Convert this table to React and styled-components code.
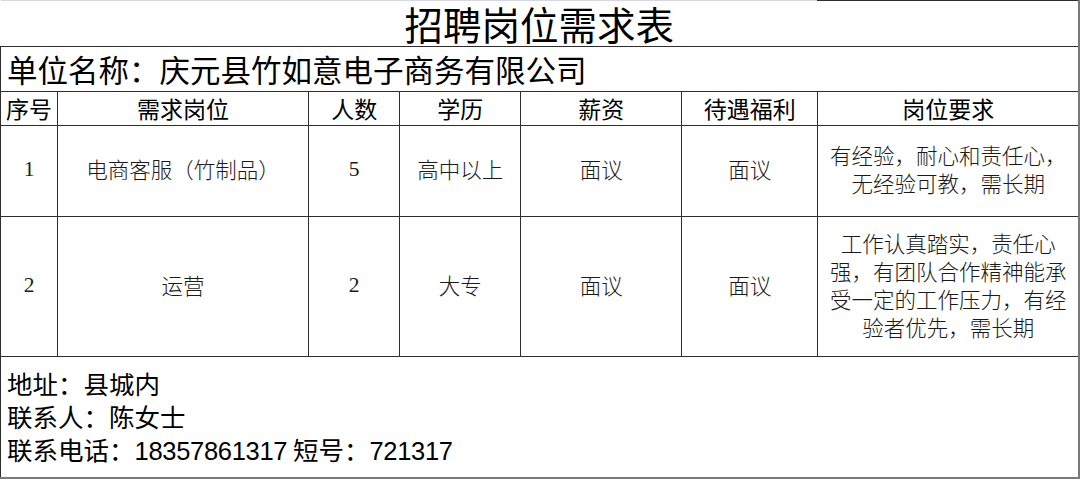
import React from 'react';
import styled, { createGlobalStyle } from 'styled-components';

const GlobalStyle = createGlobalStyle`
  html, body {
    margin: 0;
    padding: 0;
    background: #ffffff;
  }
  body {
    font-family: "Noto Sans CJK SC", sans-serif;
    color: #111;
  }
`;

const columns = [57, 251, 91, 121, 161, 136, 261];

const headers = ['序号', '需求岗位', '人数', '学历', '薪资', '待遇福利', '岗位要求'];

const jobs = [
  {
    no: '1',
    title: '电商客服（竹制品）',
    count: '5',
    edu: '高中以上',
    pay: '面议',
    perks: '面议',
    req: ['有经验，耐心和责任心，', '无经验可教，需长期'],
    height: 91,
  },
  {
    no: '2',
    title: '运营',
    count: '2',
    edu: '大专',
    pay: '面议',
    perks: '面议',
    req: ['工作认真踏实，责任心', '强，有团队合作精神能承', '受一定的工作压力，有经', '验者优先，需长期'],
    height: 140,
  },
];

const Sheet = styled.table`
  width: 1080px;
  table-layout: fixed;
  border-collapse: collapse;
  border-spacing: 0;
  background: #fff;
`;

const Cell = styled.td`
  border: 1px solid #2e2e2e;
  padding: 0 0 4px;
  text-align: center;
  vertical-align: middle;
  font-family: ${p => (p.$digit ? '"Liberation Serif", "Noto Sans CJK SC", serif' : '"Noto Sans CJK SC", sans-serif')};
  font-size: 21.5px;
  font-weight: 300;
  color: #1a1a1a;
  line-height: 28px;
  white-space: nowrap;
  &:last-child {
    border-right: 2px solid #7a7a7a;
  }
`;

const TitleCell = styled.td`
  height: 45px;
  padding: 0;
  border: none;
  border-right: 2px solid #7a7a7a;
  border-bottom: 1px solid #2e2e2e;
  background: linear-gradient(to right, #d6d6de 816px, #2e2e2e 816px) top / 100% 1px no-repeat;
  text-align: center;
  font-size: 38.5px;
  line-height: 46px;
  font-weight: 400;
  color: #000;
`;

const UnitCell = styled.td`
  height: 44px;
  padding: 0 0 0 6px;
  border: 1px solid #2e2e2e;
  border-right: 2px solid #7a7a7a;
  font-size: 30.5px;
  line-height: 44px;
  color: #000;
  white-space: nowrap;
`;

const HeadCell = styled(Cell)`
  height: 33px;
  padding: 0;
  font-size: 23px;
  font-weight: 400;
  line-height: 33px;
  color: #000;
`;

const FootCell = styled.td`
  height: 121px;
  padding: 9px 0 0 6px;
  box-sizing: border-box;
  vertical-align: top;
  border: 1px solid #2e2e2e;
  border-right: 2px solid #7a7a7a;
  border-bottom: 2px solid #7a7a7a;
  font-size: 25.5px;
  line-height: 33px;
  color: #000;
`;

const Num = styled.span`
  font-family: "Liberation Sans", sans-serif;
  letter-spacing: -0.3px;
`;

export default function App() {
  return (
    <>
      <GlobalStyle />
      <Sheet>
        <colgroup>
          {columns.map((w, i) => (
            <col key={i} style={{ width: w }} />
          ))}
        </colgroup>
        <tbody>
          <tr>
            <TitleCell colSpan={7}>招聘岗位需求表</TitleCell>
          </tr>
          <tr>
            <UnitCell colSpan={7}>单位名称：庆元县竹如意电子商务有限公司</UnitCell>
          </tr>
          <tr>
            {headers.map(h => (
              <HeadCell key={h}>{h}</HeadCell>
            ))}
          </tr>
          {jobs.map(job => (
            <tr key={job.no} style={{ height: job.height }}>
              <Cell $digit>{job.no}</Cell>
              <Cell>{job.title}</Cell>
              <Cell $digit>{job.count}</Cell>
              <Cell>{job.edu}</Cell>
              <Cell>{job.pay}</Cell>
              <Cell>{job.perks}</Cell>
              <Cell>
                {job.req.map((line, i) => (
                  <div key={i}>{line}</div>
                ))}
              </Cell>
            </tr>
          ))}
          <tr>
            <FootCell colSpan={7}>
              <div>地址：县城内</div>
              <div>联系人：陈女士</div>
              <div>
                联系电话：<Num>18357861317</Num> 短号：<Num>721317</Num>
              </div>
            </FootCell>
          </tr>
        </tbody>
      </Sheet>
    </>
  );
}
